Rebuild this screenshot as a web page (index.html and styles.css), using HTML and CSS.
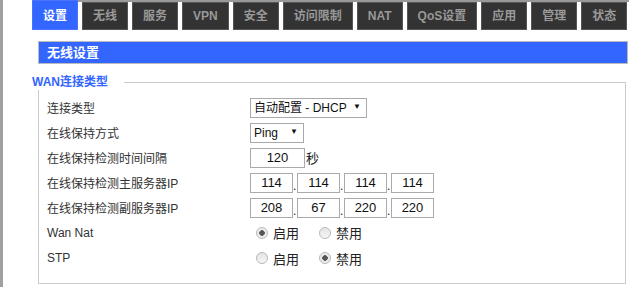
FILE: index.html
```html
<!DOCTYPE html>
<html lang="zh-CN">
<head>
    <meta charset="UTF-8">
    <title>无线设置</title>
    <link rel="stylesheet" href="styles.css">
</head>
<body>
    <ul class="nav">
        <li class="active"><a href="#">设置</a></li>
        <li><a href="#">无线</a></li>
        <li><a href="#">服务</a></li>
        <li><a href="#">VPN</a></li>
        <li><a href="#">安全</a></li>
        <li><a href="#">访问限制</a></li>
        <li><a href="#">NAT</a></li>
        <li><a href="#">QoS设置</a></li>
        <li><a href="#">应用</a></li>
        <li><a href="#">管理</a></li>
        <li><a href="#">状态</a></li>
    </ul>

    <div class="main">
        <div class="title-bar">无线设置</div>

        <fieldset class="group">
            <legend>WAN连接类型</legend>

            <div class="row">
                <span class="label">连接类型</span>
                <span class="select-wrap wide">
                    <select>
                        <option>自动配置 - DHCP</option>
                        <option>静态IP</option>
                        <option>PPPoE</option>
                    </select>
                </span>
            </div>
            <div class="row">
                <span class="label">在线保持方式</span>
                <span class="select-wrap narrow">
                    <select>
                        <option>Ping</option>
                        <option>ARP</option>
                    </select>
                </span>
            </div>
            <div class="row">
                <span class="label">在线保持检测时间间隔</span>
                <input class="num" type="text" value="120">
                <span class="unit">秒</span>
            </div>
            <div class="row">
                <span class="label">在线保持检测主服务器IP</span>
                <input class="ip" type="text" value="114"><span class="dot">.</span><input class="ip" type="text" value="114"><span class="dot">.</span><input class="ip" type="text" value="114"><span class="dot">.</span><input class="ip" type="text" value="114">
            </div>
            <div class="row">
                <span class="label">在线保持检测副服务器IP</span>
                <input class="ip" type="text" value="208"><span class="dot">.</span><input class="ip" type="text" value="67"><span class="dot">.</span><input class="ip" type="text" value="220"><span class="dot">.</span><input class="ip" type="text" value="220">
            </div>
            <div class="row tall">
                <span class="label">Wan Nat</span>
                <label class="radio"><input type="radio" name="nat" checked>启用</label>
                <label class="radio"><input type="radio" name="nat">禁用</label>
            </div>
            <div class="row tall">
                <span class="label">STP</span>
                <label class="radio"><input type="radio" name="stp">启用</label>
                <label class="radio"><input type="radio" name="stp" checked>禁用</label>
            </div>
        </fieldset>
    </div>
</body>
</html>
```

FILE: styles.css
```css
body {
    margin: 0;
    min-height: 287px;
    box-sizing: border-box;
    border-left: 3px solid #a0a0a0;
    background-color: #ffffff;
    font-family: "Liberation Sans", "Noto Sans CJK SC", sans-serif;
    font-size: 12px;
    color: #222;
}

.nav {
    display: flex;
    gap: 4px;
    list-style: none;
    margin: 0 0 0 29px;
    padding: 0;
    border-top: 2px solid #999;
    height: 28px;
}
.nav li {
    height: 28px;
    box-sizing: border-box;
    border: 1px solid #555;
    background-color: #333;
}
.nav li a {
    display: block;
    padding: 0 10px;
    line-height: 26px;
    font-weight: bold;
    color: #999;
    text-decoration: none;
    white-space: nowrap;
}
.nav li.active {
    margin-top: -2px;
    height: 30px;
    border-color: #4a73ff;
    background-color: #3366ff;
}
.nav li.active a {
    color: #fff;
    line-height: 30px;
}

.main {
    margin: 11px 0 0 35px;
}

.title-bar {
    height: 23px;
    box-sizing: border-box;
    margin-right: 1px;
    padding-left: 8px;
    border: 1px solid #bbb;
    background-color: #3366ff;
    color: #fff;
    font-size: 13px;
    font-weight: bold;
    line-height: 21px;
}

.group {
    margin: 10px 3px 0 0;
    padding: 5px 0 12px 8px;
    border: 1px solid #ccc;
    min-width: 0;
}
.group legend {
    margin-left: -15px;
    padding: 0 16px 0 0;
    font-size: 12px;
    font-weight: bold;
    line-height: 16px;
    color: #3366ff;
}

.row {
    display: flex;
    align-items: center;
    height: 25px;
}
.row.tall {
    height: 25.5px;
}
.label {
    width: 203px;
    flex-shrink: 0;
    color: #333;
}

.select-wrap {
    position: relative;
    display: inline-block;
}
.select-wrap select {
    appearance: none;
    -webkit-appearance: none;
    height: 20px;
    box-sizing: border-box;
    padding: 0 0 0 3px;
    border: 1px solid #a9a9a9;
    border-radius: 0;
    background-color: #fff;
    font-family: inherit;
    font-size: 12px;
    color: #111;
}
.select-wrap::after {
    content: "▼";
    position: absolute;
    right: 6px;
    top: 4px;
    font-size: 8px;
    color: #111;
    pointer-events: none;
}
.select-wrap.wide select {
    width: 117px;
}
.select-wrap.narrow select {
    width: 54px;
}

.num,
.ip {
    height: 20px;
    box-sizing: border-box;
    padding: 0;
    border: 1px solid #aaa;
    text-align: center;
    font-family: inherit;
    font-size: 13px;
    color: #111;
}
.num {
    width: 55px;
}
.ip {
    width: 43px;
}
.dot {
    width: 4px;
    align-self: flex-end;
    padding-bottom: 3px;
    font-size: 12px;
    line-height: 12px;
}
.unit {
    margin-left: 1px;
    font-size: 13px;
}

.radio {
    display: inline-flex;
    align-items: center;
    margin-right: 14px;
    font-size: 13px;
    color: #222;
}
.radio input {
    appearance: none;
    -webkit-appearance: none;
    width: 12px;
    height: 12px;
    margin: 0 5px 0 6px;
    border: 1px solid #b8b8b8;
    border-radius: 50%;
    background: linear-gradient(#e4e4e4, #f6f6f6);
}
.radio input:checked {
    background: radial-gradient(circle, #555 0, #555 2.5px, #e8e8e8 3px, #f4f4f4 100%);
}
```
